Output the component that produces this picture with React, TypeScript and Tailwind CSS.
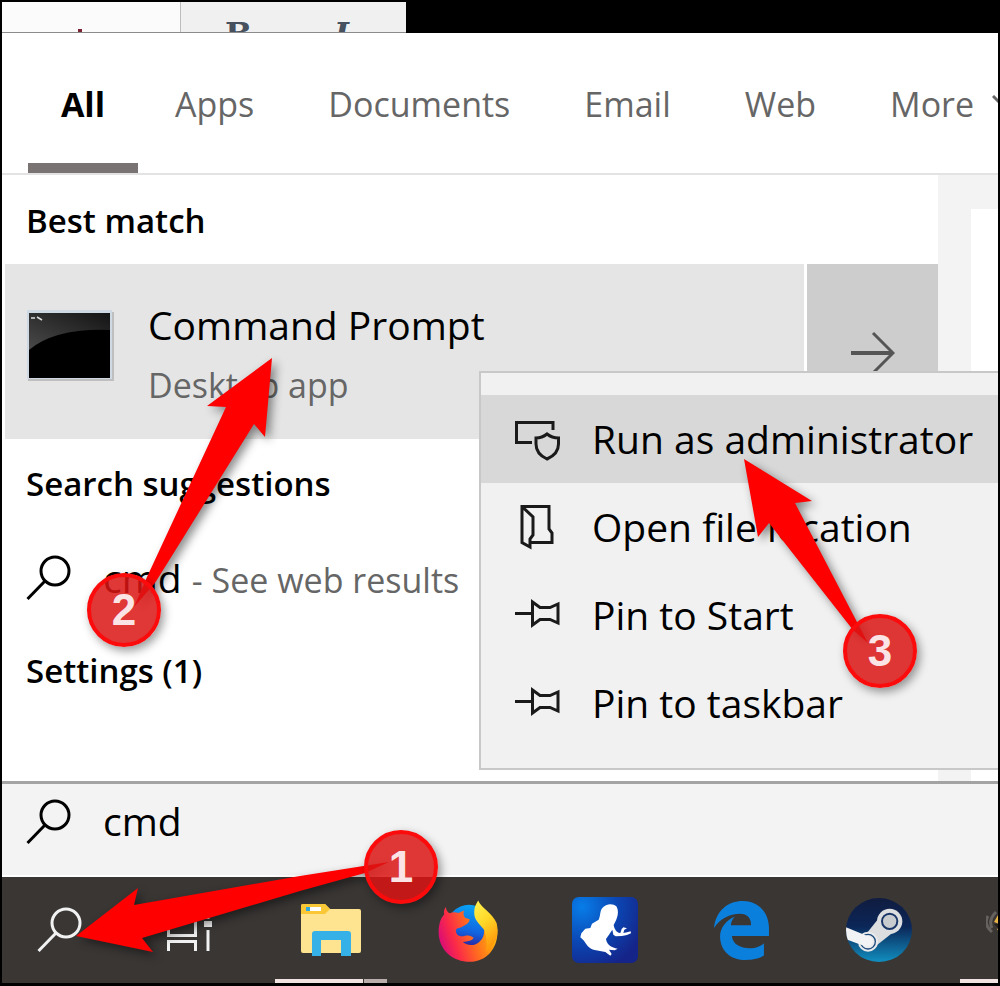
import React from "react";

type IconProps = { className?: string };

const SearchIcon: React.FC<IconProps> = ({ className }) => (
  <svg viewBox="0 0 46 46" className={className} fill="none" stroke="currentColor" strokeWidth="3">
    <circle cx="29" cy="16" r="14" />
    <path d="M19 26 L1.500 44" />
  </svg>
);

const ArrowRightIcon: React.FC<IconProps> = ({ className }) => (
  <svg viewBox="0 0 44 44" className={className} fill="none" stroke="currentColor">
    <path d="M0 23 H42" strokeWidth="4" />
    <path d="M22 3 L42 23 L22 43" strokeWidth="3" />
  </svg>
);

const ShieldWindowIcon: React.FC = () => (
  <svg viewBox="0 0 45 45" className="h-[45px] w-[45px] shrink-0" fill="none" stroke="#1a1a1a" strokeWidth="3">
    <path d="M38 13 V5.500 H1.500 V25.500 H17" />
    <path d="M32 17 Q27 21 21 21 V27 Q21 37 32 42 Q43.500 37 43.500 27 V21 Q37 21 32 17 Z" />
  </svg>
);

const FolderIcon: React.FC = () => (
  <svg viewBox="0 0 45 45" className="h-[45px] w-[45px] shrink-0" fill="none" stroke="#1a1a1a" strokeWidth="3">
    <path d="M7 1.500 H34 V24 L37 28 V37.500 H16" />
    <path d="M7 1.500 L18 12 V30 L15 34 V42 L7 37.500 Z" />
  </svg>
);

const PinIcon: React.FC = () => (
  <svg viewBox="0 0 45 45" className="h-[45px] w-[45px] shrink-0" fill="none" stroke="#1a1a1a" strokeWidth="3">
    <path d="M0 20.500 H17" />
    <path d="M17.500 9 V32 L25 26.500 H35 L43 30 V11 L35 14.500 H25 Z" />
  </svg>
);

const CommandPromptIcon: React.FC = () => (
  <svg viewBox="0 0 88 72" className="mb-[12px] h-[72px] w-[88px] shrink-0">
    <defs>
      <linearGradient id="gloss" x1="0" y1="1" x2="1" y2="0">
        <stop offset="0" stopColor="#4a4a4a" />
        <stop offset="1" stopColor="#141414" />
      </linearGradient>
    </defs>
    <rect x="1" y="2" width="86" height="69" fill="#bfbfbf" />
    <rect width="85" height="69" fill="#cfd9e4" />
    <rect x="2" y="3" width="81" height="65" fill="#000" />
    <path d="M2 3 H83 V20 Q28 18 2 40 Z" fill="url(#gloss)" />
    <path d="M4 8 H8 M10 7 L15 10" stroke="#ddd" strokeWidth="1.500" />
  </svg>
);

const TaskViewIcon: React.FC = () => (
  <svg viewBox="0 0 46 36" className="h-[36px] w-[46px]" fill="none" stroke="#f2f2f2" strokeWidth="3">
    <path d="M1.500 0 V20.500 H28.500 V0 M1.500 36 V26.500 H28.500 V36" />
    <path d="M41 0 V4 M41 15 V36" />
    <rect x="37" y="6" width="8" height="6" fill="#f2f2f2" stroke="none" />
  </svg>
);

const ExplorerIcon: React.FC = () => (
  <svg viewBox="0 0 60 52" className="h-[52px] w-[60px]">
    <path d="M0 2 Q0 0 2 0 H24 L29 5 H58 Q60 5 60 7 V47 Q60 49 58 49 H2 Q0 49 0 47 Z" fill="#fee391" />
    <path d="M0 2 Q0 0 2 0 H24 L29 5 L24 10 H0 Z" fill="#fac837" />
    <rect x="5" y="3" width="15" height="4" fill="#fff" />
    <rect x="5" y="3" width="4" height="4" fill="#2ba9e0" />
    <path d="M11 52 V30 Q11 27 14 27 H47 Q50 27 50 30 V52 H40 V36 H20 V52 Z" fill="#35b1e8" />
  </svg>
);

const FirefoxIcon: React.FC = () => (
  <svg viewBox="0 0 185 190" className="h-[63px] w-[61px]">
    <defs>
      <linearGradient id="fox" x1="0" y1="0.650" x2="1" y2="0.350">
        <stop offset="0" stopColor="#d7097c" />
        <stop offset="0.250" stopColor="#fb2a48" />
        <stop offset="0.550" stopColor="#ff6a20" />
        <stop offset="0.850" stopColor="#ffa80b" />
        <stop offset="1" stopColor="#ffd02c" />
      </linearGradient>
      <linearGradient id="globe" x1="0.600" y1="0" x2="0.400" y2="1">
        <stop offset="0" stopColor="#07a4f5" />
        <stop offset="0.600" stopColor="#1264e0" />
        <stop offset="1" stopColor="#34158c" />
      </linearGradient>
      <linearGradient id="flame" x1="0" y1="0" x2="0.400" y2="1">
        <stop offset="0" stopColor="#fff44f" />
        <stop offset="0.500" stopColor="#ffd829" />
        <stop offset="1" stopColor="#ff9b0c" />
      </linearGradient>
    </defs>
    <circle cx="97" cy="84" r="67" fill="url(#globe)" />
    <path
      d="M27 24 C28 34 31 39 38 43 C48 38 57 39 65 42 L82 34 C79 44 80 50 85 56 L99 61 C98 74 88 76 76 84 C71 88 62 86 57 94 C58 112 72 115 85 111 C97 108 105 111 111 117 C107 127 94 127 78 130 C104 152 143 132 143 97 C143 80 140 66 134 47 C152 48 177 67 183 91 C187 148 151 190 99 190 C49 190 8 157 5 105 C4 75 12 57 22 46 C19 38 23 28 27 24 Z"
      fill="url(#fox)"
    />
    <path
      d="M125 4 C132 26 168 40 181 73 C190 114 174 139 148 160 C154 139 149 114 144 94 C129 75 112 63 113 41 C113 23 119 14 125 4 Z"
      fill="url(#flame)"
    />
  </svg>
);

const FrogIcon: React.FC = () => (
  <svg viewBox="0 0 198 198" className="h-[66px] w-[66px]">
    <defs>
      <radialGradient id="pond" cx="0.150" cy="0.150" r="1">
        <stop offset="0" stopColor="#087de8" />
        <stop offset="0.550" stopColor="#0b45b2" />
        <stop offset="1" stopColor="#152488" />
      </radialGradient>
    </defs>
    <rect width="198" height="198" rx="20" fill="url(#pond)" />
    <path
      d="M91 33 C101 20 123 18 133 28 C141 42 138 58 131 72 L125 84 C127 96 135 109 145 108 L149 96 L154 91 L165 94 L157 98 L154 108 L165 106 L176 103 L177 109 L165 114 L150 117 L131 118 L124 113 L121 98 L113 110 L102 126 C105 145 119 151 137 155 L128 160 L111 158 L119 171 L115 176 L100 165 L68 159 C52 155 45 145 36 131 L25 121 L28 109 L40 95 L55 93 L60 80 L80 68 C86 55 83 43 91 33 Z"
      fill="#fff"
    />
  </svg>
);

const EdgeIcon: React.FC = () => (
  <svg viewBox="0 0 163 175" className="h-[59px] w-[55px]">
    <path
      d="M0 80 C5 30 40 0 86 0 C135 0 163 38 163 80 V104 H53 C55 130 80 140 105 140 C125 140 140 133 148 125 V162 C135 171 115 175 95 175 C50 175 20 150 18 108 C17 80 35 58 62 46 C54 54 51 62 50 72 H110 C110 50 98 38 78 38 C45 38 15 55 0 80 Z"
      fill="#0b7fdc"
    />
  </svg>
);

const SteamIcon: React.FC = () => (
  <svg viewBox="0 0 198 192" className="h-[64px] w-[66px]">
    <defs>
      <linearGradient id="steam" x1="0" y1="0" x2="0" y2="1">
        <stop offset="0" stopColor="#101c40" />
        <stop offset="0.450" stopColor="#0b2658" />
        <stop offset="1" stopColor="#118fc0" />
      </linearGradient>
      <clipPath id="disc">
        <ellipse cx="99" cy="96" rx="99" ry="96" />
      </clipPath>
    </defs>
    <g clipPath="url(#disc)">
      <rect width="198" height="192" fill="url(#steam)" />
      <path d="M94 66 L63 105 L75 155 L138 106 Z" fill="#dcdee0" />
      <circle cx="131" cy="70" r="38" fill="#dcdee0" />
      <circle cx="66" cy="131" r="30" fill="#e8eaec" />
      <circle cx="66" cy="131" r="22" fill="none" stroke="#1d4a7c" strokeWidth="4" />
      <path d="M-4 86 L62 113 Q82 116 80 132 Q74 150 55 144 L-4 122 Z" fill="#f2f3f4" />
      <circle cx="131" cy="70" r="23" fill="#c9cccf" stroke="#1b3768" strokeWidth="6" />
    </g>
  </svg>
);

const WingIcon: React.FC = () => (
  <svg viewBox="0 0 60 60" className="h-[60px] w-[60px]">
    <path d="M2 18 Q-3 26 6 34 M10 14 Q2 22 6 30" fill="none" stroke="#66625f" strokeWidth="3" />
    <path d="M17 8 L8 24 L18 28 L11 31 L18 42 L40 42 V8 Z" fill="#e8b446" />
    <path d="M8 26 H40 V30 H12 Z" fill="#241f1b" />
  </svg>
);

const tabs = ["All", "Apps", "Documents", "Email", "Web"];

const menuItems = [
  { label: "Run as administrator", icon: <ShieldWindowIcon />, active: true },
  { label: "Open file location", icon: <FolderIcon />, active: false },
  { label: "Pin to Start", icon: <PinIcon />, active: false },
  { label: "Pin to taskbar", icon: <PinIcon />, active: false },
];

const apps = [
  { name: "Firefox", icon: <FirefoxIcon /> },
  { name: "Frog", icon: <FrogIcon /> },
  { name: "Edge", icon: <EdgeIcon /> },
  { name: "Steam", icon: <SteamIcon /> },
];

const BackgroundWindow: React.FC = () => (
  <div className="flex h-[31px] shrink-0 overflow-hidden bg-black">
    <div className="flex w-[404px] border-b border-[#8c8c8c] bg-[#f0f0f0]">
      <div className="flex w-[179px] items-end border-r border-[#bdbdbd] bg-[#fbfbfb] pl-[76px]">
        <span className="h-[3px] w-[4px] bg-[#7a2436]" />
      </div>
      <div className="flex flex-1 gap-[82px] overflow-hidden pt-[14px] pl-[44px] font-['DejaVu_Serif',serif] text-[32px] leading-9 font-bold text-[#46505f]">
        <span>B</span>
        <span className="italic">I</span>
      </div>
    </div>
  </div>
);

const FilterTabs: React.FC = () => (
  <nav className="flex h-[142px] shrink-0 overflow-hidden border-b-2 border-[#e3e3e3] bg-white pl-[26px] text-[34px] text-[#666]">
    {tabs.map((tab) =>
      tab === "All" ? (
        <button key={tab} className="w-[110px] shrink-0 border-b-[10px] border-[#7a7373] pt-[12px] font-bold text-black">
          {tab}
        </button>
      ) : (
        <button key={tab} className="shrink-0 px-[37px] pt-[2px]">
          {tab}
        </button>
      ),
    )}
    <button className="flex shrink-0 items-center gap-[18px] pt-[2px] pl-[37px]">
      More
      <svg viewBox="0 0 24 14" className="mb-[4px] h-[14px] w-[24px]" fill="none" stroke="currentColor" strokeWidth="3">
        <path d="M1 1 L12 12 L23 1" />
      </svg>
    </button>
  </nav>
);

const ContextMenu: React.FC = () => (
  <div
    role="menu"
    className="absolute top-[196px] right-0 left-[477px] border-2 border-r-0 border-[#c8c8c8] bg-[#f1f1f1] pt-[22px] pb-[21px]"
  >
    {menuItems.map(({ label, icon, active }) => (
      <button
        key={label}
        role="menuitem"
        className={`flex h-[88px] w-full items-center gap-[32px] overflow-hidden pl-[34px] text-[39px] whitespace-nowrap text-black ${
          active ? "bg-[#d8d8d8]" : ""
        }`}
      >
        {icon}
        {label}
      </button>
    ))}
  </div>
);

const Results: React.FC = () => (
  <main className="relative flex flex-1 bg-white">
    <div className="flex-1 pl-[3px]">
      <h2 className="flex h-[89px] items-center pt-[2px] pl-[21px] text-[33px] font-semibold">Best match</h2>
      <div className="flex h-[175px] gap-[3px]">
        <button className="flex flex-1 items-center gap-[33px] bg-[#e5e5e5] pl-[22px] text-left">
          <CommandPromptIcon />
          <span className="flex flex-col gap-[4px] pt-[6px]">
            <span className="text-[39px] leading-[56px]">Command Prompt</span>
            <span className="text-[34px] leading-[56px] text-[#666]">Desktop app</span>
          </span>
        </button>
        <button aria-label="Open details" className="flex w-[131px] items-center justify-center bg-[#cdcdcd] text-[#555]">
          <ArrowRightIcon className="h-[44px] w-[44px]" />
        </button>
      </div>
      <h2 className="flex h-[90px] items-center pl-[21px] text-[33px] font-semibold">Search suggestions</h2>
      <button className="flex h-[98px] items-center gap-[31px] pl-[21px]">
        <SearchIcon className="h-[46px] w-[46px]" />
        <span className="text-[39px]">
          cmd <span className="text-[34px] text-[#666]">- See web results</span>
        </span>
      </button>
      <h2 className="flex h-[88px] items-center pl-[21px] text-[33px] font-semibold">Settings (1)</h2>
    </div>
    <aside className="w-[60px] bg-[#f3f3f3] pt-[34px] pl-[33px]">
      <div className="h-full bg-white" />
    </aside>
    <ContextMenu />
  </main>
);

const SearchBox: React.FC = () => (
  <label className="flex h-[96px] shrink-0 items-center gap-[31px] border-t-[3px] border-b-2 border-t-[#a3a3a3] border-b-white bg-[#f3f3f3] pb-[16px] pl-[24px]">
    <SearchIcon className="h-[46px] w-[46px] shrink-0" />
    <input aria-label="Search" defaultValue="cmd" className="min-w-0 flex-1 bg-transparent text-[39px] outline-none" />
  </label>
);

const Taskbar: React.FC = () => (
  <footer className="flex h-[106px] shrink-0 overflow-hidden bg-[#393634]">
    <button aria-label="Search" className="flex w-[116px] shrink-0 items-center justify-center text-[#f2f2f2]">
      <SearchIcon className="h-[46px] w-[46px]" />
    </button>
    <button aria-label="Task view" className="flex w-[144px] shrink-0 items-center justify-center pt-[6px]">
      <TaskViewIcon />
    </button>
    <button aria-label="File Explorer" className="flex w-[137px] shrink-0 flex-col items-center">
      <span className="flex flex-1 items-center pt-[4px]">
        <ExplorerIcon />
      </span>
      <span className="flex h-[4px] w-[112px] gap-px">
        <span className="flex-1 bg-[#f2e4e2]" />
        <span className="w-[23px] bg-[#b9aeac]" />
      </span>
    </button>
    {apps.map(({ name, icon }) => (
      <button key={name} aria-label={name} className="flex w-[137px] shrink-0 items-center justify-center">
        {icon}
      </button>
    ))}
    <button aria-label="Wings" className="flex w-[137px] shrink-0 flex-col items-center">
      <span className="flex flex-1 items-center">
        <WingIcon />
      </span>
      <span className="h-[4px] w-[112px] bg-[#f2e4e2]" />
    </button>
  </footer>
);

const Badge: React.FC<{ step: number; className: string }> = ({ step, className }) => (
  <span
    className={`absolute flex h-[74px] w-[74px] items-center justify-center rounded-full border-4 border-[#fb0b0b] bg-[#da1414]/85 font-['Liberation_Sans',sans-serif] text-[44px] leading-none font-bold text-[#fbe4e6] shadow-[3px_4px_10px_rgba(0,0,0,0.4)] ${className}`}
  >
    {step}
  </span>
);

const Arrow: React.FC<{ viewBox: string; points: string }> = ({ viewBox, points }) => (
  <svg viewBox={viewBox} className="h-full w-full overflow-visible drop-shadow-[4px_4px_5px_rgba(0,0,0,0.45)]">
    <polygon points={points} fill="#fe0000" />
  </svg>
);

// Numbered steps drawn over the desktop
const Annotations: React.FC = () => (
  <div className="pointer-events-none">
    <div className="absolute top-[824px] left-[70px] h-[140px] w-[370px]">
      <Arrow viewBox="72 826 370 140" points="76,936 138,888 134,905 300,876 389,862 365,873 300,891 142,938 153,952" />
      <Badge step={1} className="top-[4px] right-[4px]" />
    </div>
    <div className="absolute top-[348px] left-[80px] h-[300px] w-[200px]">
      <Arrow viewBox="82 350 200 300" points="272,358 207,406 226,407 147,577 134,607 155,583 254,424 265,437" />
      <Badge step={2} className="bottom-[3px] left-[5px]" />
    </div>
    <div className="absolute top-[448px] left-[738px] h-[244px] w-[180px]">
      <Arrow viewBox="740 450 180 244" points="744,459 812,501 795,503 857,622 868,643 853,630 769,523 758,537" />
      <Badge step={3} className="right-[3px] bottom-[6px]" />
    </div>
  </div>
);

export default function App() {
  return (
    <div className="relative flex min-h-screen flex-col overflow-hidden border-2 border-b-[3px] border-black bg-white font-['Open_Sans','Noto_Sans',sans-serif] text-black">
      <BackgroundWindow />
      <FilterTabs />
      <Results />
      <SearchBox />
      <Taskbar />
      <Annotations />
    </div>
  );
}
